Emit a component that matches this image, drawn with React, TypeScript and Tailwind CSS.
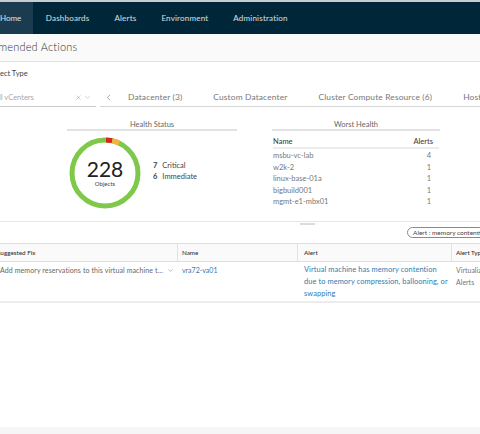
import { ChevronDown, ChevronLeft, X } from "lucide-react";

const WORST = [
  { name: "msbu-vc-lab", alerts: 4 },
  { name: "w2k-2", alerts: 1 },
  { name: "linux-base-01a", alerts: 1 },
  { name: "bigbuild001", alerts: 1 },
  { name: "mgmt-e1-mbx01", alerts: 1 },
];

const TABS = ["Datacenter (3)", "Custom Datacenter", "Cluster Compute Resource (6)", "Host System (12)"];

function Donut() {
  // ring: mostly green, small red + orange slice near top
  const r = 33;
  const c = 2 * Math.PI * r;
  return (
    <div className="relative w-[72px] h-[72px]">
      <svg width="72" height="72" viewBox="0 0 72 72" className="-rotate-90">
        <circle cx="36" cy="36" r={r} fill="none" stroke="#7ec84a" strokeWidth="5" />
        <circle cx="36" cy="36" r={r} fill="none" stroke="#d9261c" strokeWidth="5" strokeDasharray={`${c * 0.03} ${c}`} strokeDashoffset={`${-c * 0.005}`} />
        <circle cx="36" cy="36" r={r} fill="none" stroke="#f2b340" strokeWidth="5" strokeDasharray={`${c * 0.035} ${c}`} strokeDashoffset={`${-c * 0.035}`} />
      </svg>
      <div className="absolute inset-0 flex flex-col items-center justify-center">
        <span className="text-[21px] leading-[22px] text-[#222]">228</span>
        <span className="text-[6px] leading-[8px] text-[#444]">Objects</span>
      </div>
    </div>
  );
}

export default function App() {
  return (
    <div className="w-[480px] h-[434px] overflow-hidden bg-white font-['Lato',sans-serif] flex flex-col">
      <div className="h-[2px] bg-[#c9ccce]" />
      <nav className="h-[32px] bg-[#00263a] flex items-stretch text-[8px] text-white/85 whitespace-nowrap">
        <div className="bg-[#1b3b51] flex items-center pr-[12px]">Home</div>
        {["Dashboards", "Alerts", "Environment", "Administration"].map((t) => (
          <div key={t} className="flex items-center px-[12.5px] tracking-[0.2px]">{t}</div>
        ))}
      </nav>

      <div className="h-[28px] bg-[#fafafa] border-b border-[#e3e3e3] flex items-center overflow-hidden">
        <h1 className="-ml-[35px] text-[11px] font-light text-[#333] whitespace-nowrap tracking-[0.2px]">Recommended Actions</h1>
      </div>

      <div className="h-[24px] flex items-center overflow-hidden">
        <span className="-ml-[12px] text-[7.5px] text-[#444] whitespace-nowrap">Object Type</span>
      </div>

      <div className="flex items-end h-[21px]">
        <div className="w-[96px] flex items-center border-b border-[#c9c9c9] h-[18px] overflow-hidden">
          <span className="-ml-[6px] flex-1 text-[7.5px] text-[#a8a8a8] whitespace-nowrap">All vCenters</span>
          <X className="w-[7px] h-[7px] text-[#aaa] mr-[2px]" strokeWidth={2} />
          <ChevronDown className="w-[7px] h-[7px] text-[#aaa] mr-[5px]" strokeWidth={2} />
        </div>
        <div className="ml-[4px] flex-1 flex items-center h-[18px] border-b border-[#d7d7d7] whitespace-nowrap overflow-hidden">
          <ChevronLeft className="shrink-0 w-[9px] h-[9px] text-[#666] ml-[4px] mr-[15px]" strokeWidth={1.6} />
          {TABS.map((t) => (
            <span key={t} className="shrink-0 text-[8.4px] text-[#777] mr-[31px] tracking-[0.15px]">{t}</span>
          ))}
        </div>
      </div>

      <div className="flex mt-[12px] h-[95px]">
        <section className="ml-[67px] w-[170px] flex flex-col">
          <div className="text-[7.5px] text-[#666] text-center h-[12px] border-b-2 border-[#e2e2e2]">Health Status</div>
          <div className="flex items-center mt-[6px]">
            <div className="ml-[2px]"><Donut /></div>
            <div className="ml-[12px] -mt-[4px] text-[7.5px] leading-[11px] text-[#444]">
              <div><span className="font-bold mr-[5px]">7</span>Critical</div>
              <div><span className="font-bold mr-[5px]">6</span>Immediate</div>
            </div>
          </div>
        </section>
        <section className="ml-[35px] w-[168px] flex flex-col">
          <div className="text-[7.5px] text-[#666] text-center h-[12px] border-b-2 border-[#e2e2e2]">Worst Health</div>
          <div className="mx-[1px] mt-[5px] flex justify-between text-[7.5px] font-medium text-[#444] border-b-2 border-[#ececec] h-[13px] leading-[11px]">
            <span>Name</span><span className="mr-[6px]">Alerts</span>
          </div>
          {WORST.map((w) => (
            <div key={w.name} className="mx-[1px] flex justify-between text-[7.5px] text-[#777] h-[11.6px] leading-[13px]">
              <span>{w.name}</span><span className="mr-[8px]">{w.alerts}</span>
            </div>
          ))}
        </section>
      </div>

      <div className="relative border-b border-[#e6e6e6] h-[8px]">
        <div className="absolute left-[300px] top-[9px] w-[15px] h-[2px] bg-[#dcdcdc]" />
      </div>

      <div className="flex h-[21px] items-center overflow-hidden">
        <div className="ml-[407px] shrink-0 border border-[#8a8a8a] rounded-full px-[5px] h-[11px] flex items-center text-[6.5px] text-[#444] whitespace-nowrap">
          Alert : memory contention
        </div>
      </div>

      <div className="flex h-[19px] bg-[#fafafa] border-y border-[#dddddd] text-[6.3px] font-medium text-[#333] items-stretch whitespace-nowrap overflow-hidden">
        <div className="w-[178px] shrink-0 border-r border-[#e2e2e2] flex items-center overflow-hidden"><span className="-ml-[3px]">Suggested Fix</span></div>
        <div className="w-[120px] shrink-0 border-r border-[#e2e2e2] flex items-center pl-[4px]">Name</div>
        <div className="w-[154px] shrink-0 border-r border-[#e2e2e2] flex items-center pl-[6px]">Alert</div>
        <div className="flex-1 flex items-center pl-[4px]">Alert Type</div>
      </div>

      <div className="flex h-[41px] border-b-2 border-[#ececec] text-[7px] leading-[12px] pt-[2px] whitespace-nowrap overflow-hidden">
        <div className="w-[178px] shrink-0 flex items-start text-[#666]">
          <span className="tracking-[0.1px]">Add memory reservations to this virtual machine t...</span>
          <ChevronDown className="shrink-0 w-[7px] h-[7px] text-[#888] ml-[4px] mt-[3px]" strokeWidth={2} />
        </div>
        <div className="w-[120px] shrink-0 pl-[4px] text-[#2b7bb0]">vra72-va01</div>
        <div className="w-[154px] shrink-0 pl-[6px] text-[#2b7bb0] text-[7.4px] tracking-[0.1px]">
          <div>Virtual machine has memory contention</div>
          <div>due to memory compression, ballooning, or</div>
          <div>swapping</div>
        </div>
        <div className="flex-1 pl-[4px] text-[#777]">
          <div>Virtualization</div>
          <div>Alerts</div>
        </div>
      </div>

      <div className="flex-1" />
      <div className="h-[7px] bg-[#f6f6f6]" />
    </div>
  );
}
